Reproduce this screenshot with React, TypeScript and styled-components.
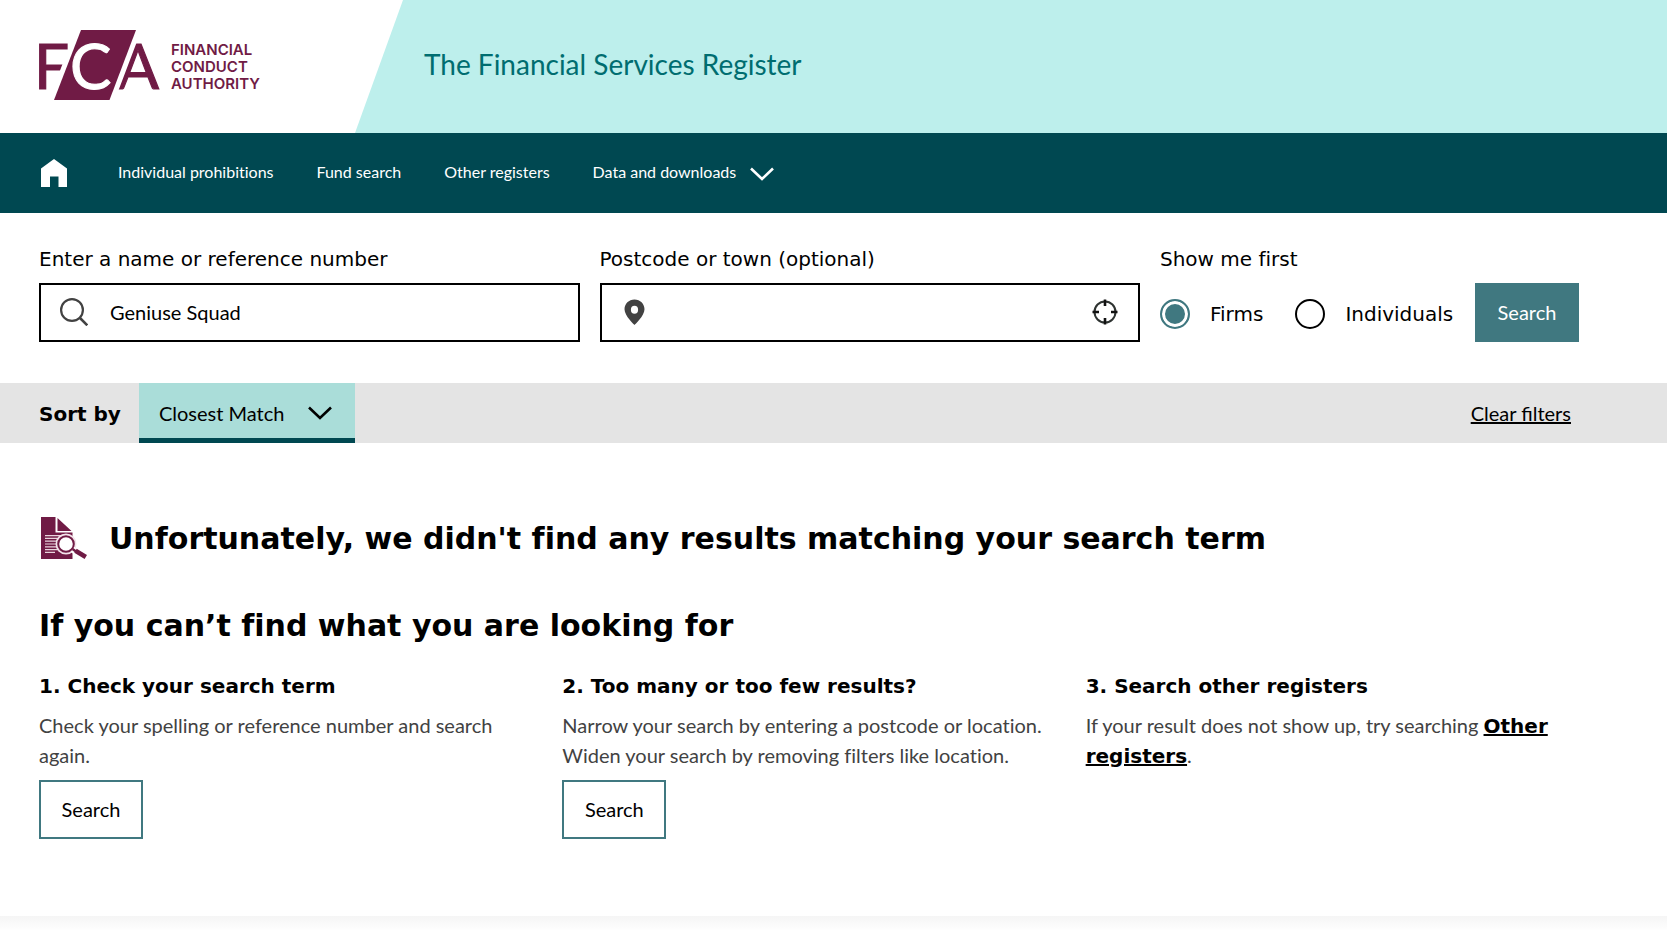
import React from "react";
import styled, { createGlobalStyle } from "styled-components";

const GlobalStyle = createGlobalStyle`
  *, *::before, *::after { box-sizing: border-box; }
  body {
    margin: 0;
    background: #fff;
    color: #000;
    font-family: Lato, "Liberation Sans", sans-serif;
    font-size: 20px;
    line-height: 30px;
  }
`;

const headingFont = `Verdana, "DejaVu Sans", sans-serif`;
const teal = "#407880";
const darkTeal = "#004851";
const plum = "#701b45";

const Header = styled.header`
  display: flex;
  min-height: 133px;
`;

const LogoLink = styled.a`
  flex: 0 0 355px;
  padding: 30px 0 0 39px;
`;

const LogoSvg = styled.svg`
  display: block;
  overflow: visible;
  font-family: Lato, sans-serif;
`;

const LogoName = styled.text`
  font-family: Inter, Lato, sans-serif;
  font-size: 15px;
  font-weight: 600;
`;

const Banner = styled.div`
  flex: 1;
  display: flex;
  align-items: center;
  padding: 0 20px 5px 69px;
  background: #bdefec;
  clip-path: polygon(48px 0, 100% 0, 100% 100%, 0 100%);
`;

const SiteTitle = styled.p`
  margin: 0;
  color: #006d70;
  font-size: 28px;
  line-height: 36px;
  font-variant-ligatures: none;
`;

const Nav = styled.nav`
  display: flex;
  align-items: center;
  gap: 43px;
  min-height: 80px;
  padding: 0 39px;
  background: ${darkTeal};
  font-variant-ligatures: none;
`;

const HomeLink = styled.a`
  width: 36px;
  padding-left: 2px;
  svg { display: block; }
`;

const NavLink = styled.a`
  padding-bottom: 2px;
  color: #fff;
  font-size: 16px;
  line-height: 24px;
  text-decoration: none;
`;

const NavButton = styled.button`
  display: flex;
  align-items: center;
  gap: 14px;
  padding: 0 0 2px;
  border: 0;
  background: none;
  color: #fff;
  font: inherit;
  font-size: 16px;
  line-height: 24px;
  svg { margin-top: 4px; }
`;

const SearchForm = styled.form`
  display: grid;
  grid-template-columns: 1fr 1fr auto auto;
  column-gap: 20px;
  align-items: end;
  padding: 31px 88px 41px 39px;
`;

const Field = styled.div`
  display: flex;
  flex-direction: column;
  gap: 9px;
`;

const FieldLabel = styled.label`
  font-family: ${headingFont};
  line-height: 30px;
`;

const InputBox = styled.div`
  display: flex;
  align-items: center;
  height: 59px;
  padding: 0 20px 2px 19px;
  border: 2px solid #000;
  svg { flex: none; display: block; }
`;

const TextInput = styled.input`
  flex: 1;
  min-width: 0;
  margin-left: 22px;
  padding: 0;
  border: 0;
  outline: 0;
  background: none;
  color: #000;
  font: inherit;
`;

const IconButton = styled.button`
  padding: 0;
  border: 0;
  background: none;
`;

const RadioSet = styled.fieldset`
  min-width: 295px;
  margin: 0;
  padding: 0;
  border: 0;
  font-family: ${headingFont};
  font-variant-ligatures: none;
`;

const RadioLegend = styled.legend`
  padding: 0;
  margin-bottom: 9px;
  line-height: 30px;
`;

const RadioRow = styled.div`
  display: flex;
  align-items: center;
  gap: 32px;
  height: 59px;
  padding-top: 3px;
`;

const RadioLabel = styled.label`
  display: flex;
  align-items: center;
  gap: 20px;
`;

const Radio = styled.input`
  appearance: none;
  width: 30px;
  height: 30px;
  margin: 0;
  border: 2px solid #000;
  border-radius: 50%;
  background: #fff;
  &:checked {
    border-color: ${teal};
    background: ${teal};
    box-shadow: inset 0 0 0 3px #fff;
  }
`;

const Button = styled.button<{ $outline?: boolean }>`
  height: 59px;
  min-width: 104px;
  padding: 0 20px 2px;
  border: 2px solid ${teal};
  background: ${(p) => (p.$outline ? "#fff" : teal)};
  color: ${(p) => (p.$outline ? "#000" : "#fff")};
  font: inherit;
`;

const SortBar = styled.div`
  display: flex;
  align-items: center;
  padding: 0 96px 0 39px;
  background: #e4e4e4;
`;

const SortLabel = styled.label`
  margin-right: 18px;
  padding-top: 2px;
  font-family: ${headingFont};
  font-weight: 700;
`;

const SortBox = styled.div`
  display: grid;
  align-items: center;
  background: #aaddd9;
  border-bottom: 5px solid ${darkTeal};
  > * { grid-area: 1 / 1; }
  svg { justify-self: end; margin: 4px 23px 0 0; pointer-events: none; }
`;

const SortSelect = styled.select`
  appearance: none;
  height: 55px;
  padding: 4px 70px 0 20px;
  border: 0;
  border-radius: 0;
  background: none;
  color: #000;
  font: inherit;
`;

const ClearLink = styled.a`
  margin-left: auto;
  color: #000;
  text-decoration-thickness: 2px;
`;

const Main = styled.main`
  padding: 73px 88px 77px 39px;
`;

const NoResults = styled.div`
  display: flex;
  align-items: center;
  gap: 22px;
  padding-left: 2px;
  margin-bottom: 42px;
  svg { flex: none; margin-bottom: 2px; }
`;

const Heading = styled.h2`
  margin: 0;
  font-family: ${headingFont};
  font-size: 30px;
  line-height: 45px;
  font-variant-ligatures: none;
`;

const Tips = styled.div`
  display: grid;
  grid-template-columns: repeat(3, 1fr);
  column-gap: 30px;
  margin-top: 23px;
`;

const TipTitle = styled.h3`
  margin: 0 0 9px;
  font-family: ${headingFont};
  font-size: 20px;
  line-height: 30px;
`;

const TipText = styled.p`
  margin: 0 0 10px;
  color: #424242;
  font-variant-ligatures: none;
`;

const TipLink = styled.a`
  color: #000;
  font-family: ${headingFont};
  font-weight: 700;
  line-height: 20px;
  text-decoration-thickness: 2px;
`;

const Footer = styled.footer`
  height: 14px;
  background: linear-gradient(#f5f5f5, #fefefe);
`;

const Chevron = () => (
  <svg width="24" height="14" viewBox="0 0 24 14" fill="none" stroke="currentColor" strokeWidth="2.600" aria-hidden="true">
    <path d="M1 1.500 12 12 23 1.500" />
  </svg>
);

const FcaLogo = () => (
  <LogoSvg width="230" height="70" viewBox="0 0 230 70" role="img" aria-label="Financial Conduct Authority">
    <g fill={plum}>
      <g stroke={plum} strokeWidth="1.200">
        <text x="-5" y="59" fontSize="62">F</text>
        <text x="78" y="59" fontSize="62">A</text>
      </g>
      <path d="M42 0H97L70.500 70H15Z" stroke="#fff" strokeWidth="10" />
      <path d="M42 0H97L70.500 70H15Z" />
      <LogoName x="132" y="25">FINANCIAL</LogoName>
      <LogoName x="132" y="42">CONDUCT</LogoName>
      <LogoName x="132" y="59">AUTHORITY</LogoName>
    </g>
    <text x="31" y="59" fontSize="62" fill="#fff" stroke="#fff">C</text>
  </LogoSvg>
);

const HomeIcon = () => (
  <svg width="26" height="28" viewBox="0 0 26 28" fill="#fff" aria-hidden="true">
    <path d="M13 0 26 9.500V28H17.500V17.500H9V28H0V9.500Z" />
  </svg>
);

const SearchIcon = () => (
  <svg width="28" height="28" viewBox="0 0 28 28" fill="none" stroke="#424242" strokeWidth="2.200" aria-hidden="true">
    <circle cx="12" cy="12" r="10.900" />
    <path d="M19.500 19.500 27.300 27.300" strokeWidth="2.600" />
  </svg>
);

const PinIcon = () => (
  <svg width="28" height="28" viewBox="0 0 28 28" aria-hidden="true">
    <path fill="#424242" fillRule="evenodd" d="M13.500 1.500C7.800 1.500 3.500 5.800 3.500 11.300 3.500 18 13.500 27 13.500 27S23.500 18 23.500 11.300C23.500 5.800 19.200 1.500 13.500 1.500ZM13.500 7.700A3.600 4 0 1 1 13.500 15.700 3.600 4 0 1 1 13.500 7.700Z" />
  </svg>
);

const LocateIcon = () => (
  <svg width="26" height="26" viewBox="0 0 26 26" fill="none" stroke="#2e3331" strokeWidth="2" aria-hidden="true">
    <circle cx="13" cy="13" r="10.500" />
    <path stroke="#111" strokeWidth="2.600" d="M13 .5V7M13 19V25.500M.5 13H7M19 13H25.500" />
  </svg>
);

const DocumentSearchIcon = () => (
  <svg width="46" height="42" viewBox="0 0 46 42" aria-hidden="true">
    <path fill={plum} d="M0 0H14.500V15.500H31.500V42H0ZM16.500 1 30.500 14H16.500Z" />
    <path stroke="#e9d5de" strokeWidth="1.200" d="M4 18.600H20M4 21.400H17M4 24.200H16M4 27H16M4 29.800H16M4 32.600H17M4 35.400H14" />
    <circle cx="25" cy="27" r="10.500" fill="#f3e3ea" />
    <circle cx="25" cy="27" r="7.800" fill="#fff" stroke={plum} strokeWidth="2" />
    <path stroke="#fff" strokeWidth="6" d="M31.500 32.500 35 35" />
    <path stroke={plum} strokeWidth="2.500" d="M31.500 32 35 34.500" />
    <path stroke={plum} strokeWidth="4.600" d="M34.500 33.800 44.800 40" />
  </svg>
);

export default function App() {
  return (
    <>
      <GlobalStyle />
      <Header>
        <LogoLink href="#">
          <FcaLogo />
        </LogoLink>
        <Banner>
          <SiteTitle>The Financial Services Register</SiteTitle>
        </Banner>
      </Header>
      <Nav>
        <HomeLink href="#" aria-label="Home">
          <HomeIcon />
        </HomeLink>
        <NavLink href="#">Individual prohibitions</NavLink>
        <NavLink href="#">Fund search</NavLink>
        <NavLink href="#">Other registers</NavLink>
        <NavButton type="button">
          Data and downloads
          <Chevron />
        </NavButton>
      </Nav>
      <SearchForm onSubmit={(e) => e.preventDefault()}>
        <Field>
          <FieldLabel htmlFor="name">Enter a name or reference number</FieldLabel>
          <InputBox>
            <SearchIcon />
            <TextInput id="name" type="text" defaultValue="Geniuse Squad" />
          </InputBox>
        </Field>
        <Field>
          <FieldLabel htmlFor="place">Postcode or town (optional)</FieldLabel>
          <InputBox>
            <PinIcon />
            <TextInput id="place" type="text" />
            <IconButton type="button" aria-label="Use my location">
              <LocateIcon />
            </IconButton>
          </InputBox>
        </Field>
        <RadioSet>
          <RadioLegend>Show me first</RadioLegend>
          <RadioRow>
            <RadioLabel>
              <Radio type="radio" name="kind" value="firms" defaultChecked />
              Firms
            </RadioLabel>
            <RadioLabel>
              <Radio type="radio" name="kind" value="individuals" />
              Individuals
            </RadioLabel>
          </RadioRow>
        </RadioSet>
        <Button type="submit">Search</Button>
      </SearchForm>
      <SortBar>
        <SortLabel htmlFor="sort">Sort by</SortLabel>
        <SortBox>
          <SortSelect id="sort" defaultValue="closest">
            <option value="closest">Closest Match</option>
          </SortSelect>
          <Chevron />
        </SortBox>
        <ClearLink href="#">Clear filters</ClearLink>
      </SortBar>
      <Main>
        <NoResults>
          <DocumentSearchIcon />
          <Heading>Unfortunately, we didn't find any results matching your search term</Heading>
        </NoResults>
        <Heading>If you can’t find what you are looking for</Heading>
        <Tips>
          <section>
            <TipTitle>1. Check your search term</TipTitle>
            <TipText>Check your spelling or reference number and search again.</TipText>
            <Button type="button" $outline>Search</Button>
          </section>
          <section>
            <TipTitle>2. Too many or too few results?</TipTitle>
            <TipText>
              Narrow your search by entering a postcode or location. Widen your search by removing filters like location.
            </TipText>
            <Button type="button" $outline>Search</Button>
          </section>
          <section>
            <TipTitle>3. Search other registers</TipTitle>
            <TipText>
              If your result does not show up, try searching <TipLink href="#">Other registers</TipLink>.
            </TipText>
          </section>
        </Tips>
      </Main>
      <Footer />
    </>
  );
}
